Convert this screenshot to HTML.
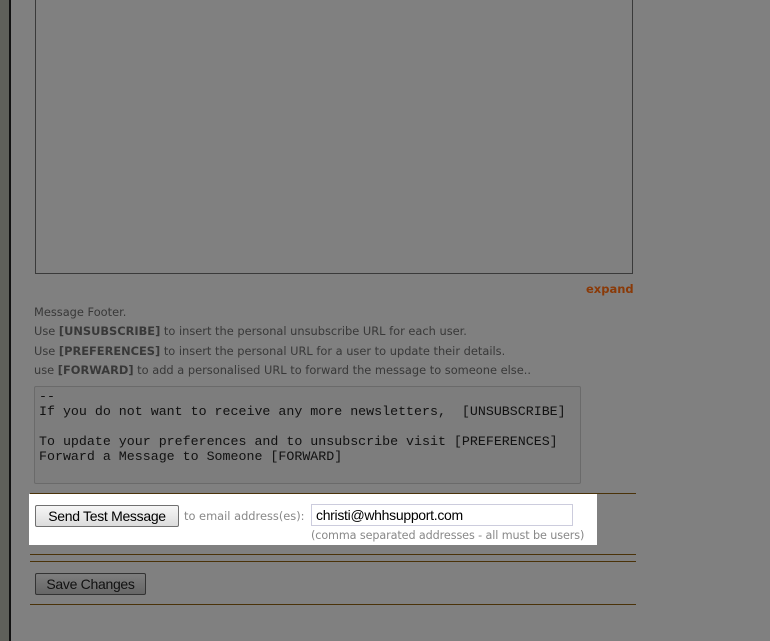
<!DOCTYPE html>
<html><head><style>
body{margin:0;width:770px;height:641px;background:#808080;position:relative;overflow:hidden;font-family:"DejaVu Sans","Liberation Sans",sans-serif;}
.a{position:absolute}
.t{font-size:11.4px;color:#383838;left:34px;letter-spacing:0}
.hr{position:absolute;left:30px;width:606px;height:1px;background:#4a3208}
pre{margin:0;font-family:"Liberation Mono",monospace;font-size:13.3px;line-height:15px;color:#111;letter-spacing:0}
.btn{position:absolute;border:1px solid #555;border-radius:2px;font-family:"Liberation Sans",sans-serif;font-size:14px;color:#000;text-align:center;line-height:20px;letter-spacing:-0.3px}
</style></head><body>
<div class="a" style="left:0;top:0;width:9px;height:641px;background:#5f605a"></div>
<div class="a" style="left:9px;top:0;width:2px;height:641px;background:#111"></div>
<div class="a" style="left:35px;top:-5px;width:596px;height:277px;border:1px solid #3a3a3a"></div>
<div class="a" style="left:586px;top:282px;font-size:11.5px;font-weight:bold;color:#8a3a08">expand</div>
<div class="a t" style="top:305px">Message Footer.</div>
<div class="a t" style="top:324px">Use <b>[UNSUBSCRIBE]</b> to insert the personal unsubscribe URL for each user.</div>
<div class="a t" style="top:344px">Use <b>[PREFERENCES]</b> to insert the personal URL for a user to update their details.</div>
<div class="a t" style="top:363px">use <b>[FORWARD]</b> to add a personalised URL to forward the message to someone else..</div>
<div class="a" style="left:34px;top:386px;width:545px;height:96px;border:1px solid #6a6a6a;background:#7d7d7d;border-radius:2px">
<pre style="position:absolute;left:4px;top:2px">--
If you do not want to receive any more newsletters,  [UNSUBSCRIBE]

To update your preferences and to unsubscribe visit [PREFERENCES]
Forward a Message to Someone [FORWARD]</pre></div>
<div class="hr" style="top:493px"></div>
<div class="a" style="left:29px;top:494px;width:568px;height:51px;background:#fff"></div>
<div class="btn" style="left:35px;top:505px;width:142px;height:20px;background:linear-gradient(#f6f6f6,#dcdcdc);border-color:#707070">Send Test Message</div>
<div class="a" style="left:184px;top:509px;font-size:11.4px;color:#888;font-family:'DejaVu Sans',sans-serif">to email address(es):</div>
<div class="a" style="left:311px;top:504px;width:256px;height:20px;border:1px solid #ccd;font-family:'Liberation Sans',sans-serif;font-size:14px;line-height:20px;padding-left:4px;letter-spacing:-0.3px">christi@whhsupport.com</div>
<div class="a" style="left:311px;top:529px;font-size:11.2px;color:#888;letter-spacing:-0.1px;white-space:nowrap">(comma separated addresses - all must be users)</div>
<div class="hr" style="top:554px"></div>
<div class="hr" style="top:561px"></div>
<div class="btn" style="left:35px;top:573px;width:109px;height:20px;background:linear-gradient(#7e7e7e,#666);border-color:#333;color:#111">Save Changes</div>
<div class="hr" style="top:604px"></div>
</body></html>
